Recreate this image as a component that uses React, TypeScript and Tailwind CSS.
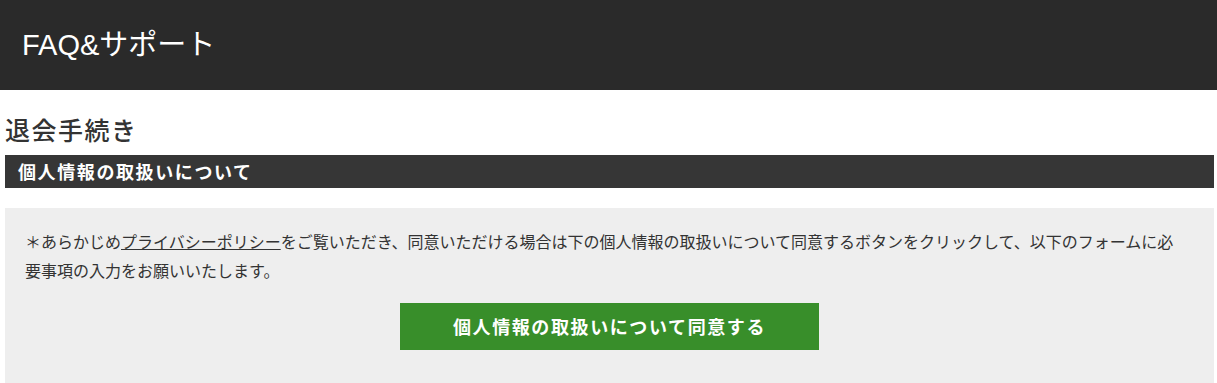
import React from "react";

const jp = '"Noto Sans CJK JP", "Liberation Sans", sans-serif';
const hdr = '"Liberation Sans", "Noto Sans CJK JP", sans-serif';

export default function App() {
  return (
    <div className="w-full min-h-[383px] bg-white text-[#333333]" style={{ fontFamily: jp }}>
      <header className="h-[90px] bg-[#2a2a2a] flex items-center pl-[22px]">
        <h1 className="text-[29px] text-white font-normal leading-none" style={{ fontFamily: hdr }}>
          FAQ&amp;サポート
        </h1>
      </header>
      <div className="pl-[5px] pr-[3px]">
        <h2 className="mt-[21px] h-[36px] leading-[36px] text-[25px] font-medium tracking-[1.5px] text-[#333333]">
          退会手続き
        </h2>
        <div className="mt-[8px] h-[33px] leading-[33px] bg-[#363636] pl-[13px] text-white text-[18px] font-bold tracking-[1.6px]">
          個人情報の取扱いについて
        </div>
        <div className="mt-[20px] bg-[#eeeeee] pl-[20px] pr-[30px] pt-[19px] pb-[40px]">
          <p className="text-[16px] leading-[29px] text-[#333333]">
            ＊あらかじめ
            <a href="#" className="underline text-[#333333]">
              プライバシーポリシー
            </a>
            をご覧いただき、同意いただける場合は下の個人情報の取扱いについて同意するボタンをクリックして、以下のフォームに必要事項の入力をお願いいたします。
          </p>
          <div className="flex justify-center pl-[10px] mt-[18px]">
            <button className="w-[419px] h-[47px] bg-[#388e2a] text-white text-[18px] font-bold tracking-[1.6px]">
              個人情報の取扱いについて同意する
            </button>
          </div>
        </div>
      </div>
    </div>
  );
}
